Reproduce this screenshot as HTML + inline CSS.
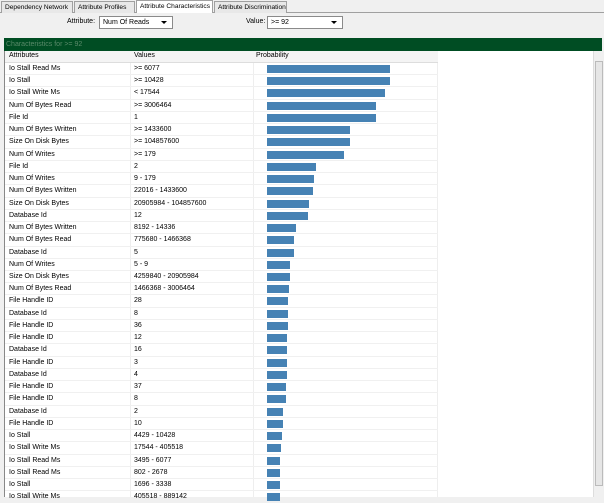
<!DOCTYPE html>
<html><head><meta charset="utf-8"><style>
*{margin:0;padding:0;box-sizing:border-box}
body{width:604px;height:497px;overflow:hidden;background:#f0f0f0;font-family:"Liberation Sans",sans-serif;font-size:7px;color:#000;position:relative}
.tabs{position:absolute;left:0;top:0;width:604px;height:13px;border-bottom:1px solid #a0a0a0;background:#f0f0f0}
.tab{position:absolute;top:1px;height:12px;border:1px solid #a0a0a0;border-bottom:none;background:#e8e8e8;font-size:6.6px;line-height:11px;padding-left:3px;white-space:nowrap;overflow:hidden}
.tab.on{background:#fff;top:0;height:13px}
.lbl{position:absolute;top:18px;font-size:7px}
.sel{position:absolute;top:16px;height:13px;border:1px solid #8a8a8a;background:#fff;font-size:7px;line-height:11px;padding-left:3px}
.sel:after{content:"";position:absolute;right:5px;top:4px;border:3px solid transparent;border-top:3px solid #000}
.green{position:absolute;left:4px;top:38px;width:598px;height:13px;background:#004d23;color:#5a8a6a;font-size:7px;line-height:13px;padding-left:2px}
.panel{position:absolute;left:4px;top:51px;width:598px;height:446px;background:#fff;border-left:1px solid #888}
.hdr{position:absolute;left:0;top:0;width:433px;height:12px;background:#f4f4f4;border-bottom:1px solid #ddd}
.hdr span{position:absolute;top:1px}
.vl{position:absolute;top:0;width:1px;height:446px;background:#eee}
.rows{position:absolute;left:0;top:12px;width:433px}
.r{height:12.24px;border-bottom:1px solid #f0f0f0;position:relative;line-height:11px}
.r span{position:absolute;top:0}
.r .a{left:4px}.r .v{left:129px}
.r i{position:absolute;left:262px;top:2px;height:8px;background:#4682b4}
.sb{position:absolute;left:588px;top:0;width:10px;height:446px;background:#f0f0f0;border-left:1px solid #ddd}
.th{position:absolute;left:1px;top:10px;width:8px;height:425px;background:#e6e6e6;border:1px solid #bbb}
</style></head><body>
<div class="tabs">
<div class="tab" style="left:1px;width:72px">Dependency Network</div>
<div class="tab" style="left:74px;width:61px">Attribute Profiles</div>
<div class="tab on" style="left:136px;width:77px">Attribute Characteristics</div>
<div class="tab" style="left:214px;width:73px">Attribute Discrimination</div>
</div>
<div class="lbl" style="left:67px">Attribute:</div>
<div class="sel" style="left:99px;width:74px">Num Of Reads</div>
<div class="lbl" style="left:246px">Value:</div>
<div class="sel" style="left:267px;width:76px">&gt;= 92</div>
<div class="green">Characteristics for &gt;= 92</div>
<div class="panel">
<div class="vl" style="left:125px"></div><div class="vl" style="left:248px"></div><div class="vl" style="left:432px"></div>
<div class="hdr"><span style="left:4px">Attributes</span><span style="left:129px">Values</span><span style="left:251px">Probability</span></div>
<div class="rows">
<div class="r"><span class="a">Io Stall Read Ms</span><span class="v">&gt;= 6077</span><i style="width:123px"></i></div>
<div class="r"><span class="a">Io Stall</span><span class="v">&gt;= 10428</span><i style="width:123px"></i></div>
<div class="r"><span class="a">Io Stall Write Ms</span><span class="v">&lt; 17544</span><i style="width:118px"></i></div>
<div class="r"><span class="a">Num Of Bytes Read</span><span class="v">&gt;= 3006464</span><i style="width:109px"></i></div>
<div class="r"><span class="a">File Id</span><span class="v">1</span><i style="width:109px"></i></div>
<div class="r"><span class="a">Num Of Bytes Written</span><span class="v">&gt;= 1433600</span><i style="width:83px"></i></div>
<div class="r"><span class="a">Size On Disk Bytes</span><span class="v">&gt;= 104857600</span><i style="width:83px"></i></div>
<div class="r"><span class="a">Num Of Writes</span><span class="v">&gt;= 179</span><i style="width:77px"></i></div>
<div class="r"><span class="a">File Id</span><span class="v">2</span><i style="width:49px"></i></div>
<div class="r"><span class="a">Num Of Writes</span><span class="v">9 - 179</span><i style="width:47px"></i></div>
<div class="r"><span class="a">Num Of Bytes Written</span><span class="v">22016 - 1433600</span><i style="width:46px"></i></div>
<div class="r"><span class="a">Size On Disk Bytes</span><span class="v">20905984 - 104857600</span><i style="width:42px"></i></div>
<div class="r"><span class="a">Database Id</span><span class="v">12</span><i style="width:41px"></i></div>
<div class="r"><span class="a">Num Of Bytes Written</span><span class="v">8192 - 14336</span><i style="width:29px"></i></div>
<div class="r"><span class="a">Num Of Bytes Read</span><span class="v">775680 - 1466368</span><i style="width:27px"></i></div>
<div class="r"><span class="a">Database Id</span><span class="v">5</span><i style="width:27px"></i></div>
<div class="r"><span class="a">Num Of Writes</span><span class="v">5 - 9</span><i style="width:23px"></i></div>
<div class="r"><span class="a">Size On Disk Bytes</span><span class="v">4259840 - 20905984</span><i style="width:23px"></i></div>
<div class="r"><span class="a">Num Of Bytes Read</span><span class="v">1466368 - 3006464</span><i style="width:22px"></i></div>
<div class="r"><span class="a">File Handle ID</span><span class="v">28</span><i style="width:21px"></i></div>
<div class="r"><span class="a">Database Id</span><span class="v">8</span><i style="width:21px"></i></div>
<div class="r"><span class="a">File Handle ID</span><span class="v">36</span><i style="width:21px"></i></div>
<div class="r"><span class="a">File Handle ID</span><span class="v">12</span><i style="width:20px"></i></div>
<div class="r"><span class="a">Database Id</span><span class="v">16</span><i style="width:20px"></i></div>
<div class="r"><span class="a">File Handle ID</span><span class="v">3</span><i style="width:20px"></i></div>
<div class="r"><span class="a">Database Id</span><span class="v">4</span><i style="width:20px"></i></div>
<div class="r"><span class="a">File Handle ID</span><span class="v">37</span><i style="width:19px"></i></div>
<div class="r"><span class="a">File Handle ID</span><span class="v">8</span><i style="width:19px"></i></div>
<div class="r"><span class="a">Database Id</span><span class="v">2</span><i style="width:16px"></i></div>
<div class="r"><span class="a">File Handle ID</span><span class="v">10</span><i style="width:16px"></i></div>
<div class="r"><span class="a">Io Stall</span><span class="v">4429 - 10428</span><i style="width:15px"></i></div>
<div class="r"><span class="a">Io Stall Write Ms</span><span class="v">17544 - 405518</span><i style="width:14px"></i></div>
<div class="r"><span class="a">Io Stall Read Ms</span><span class="v">3495 - 6077</span><i style="width:13px"></i></div>
<div class="r"><span class="a">Io Stall Read Ms</span><span class="v">802 - 2678</span><i style="width:13px"></i></div>
<div class="r"><span class="a">Io Stall</span><span class="v">1696 - 3338</span><i style="width:13px"></i></div>
<div class="r"><span class="a">Io Stall Write Ms</span><span class="v">405518 - 889142</span><i style="width:13px"></i></div>
</div>
<div class="sb"><div class="th"></div></div>
</div>
</body></html>
